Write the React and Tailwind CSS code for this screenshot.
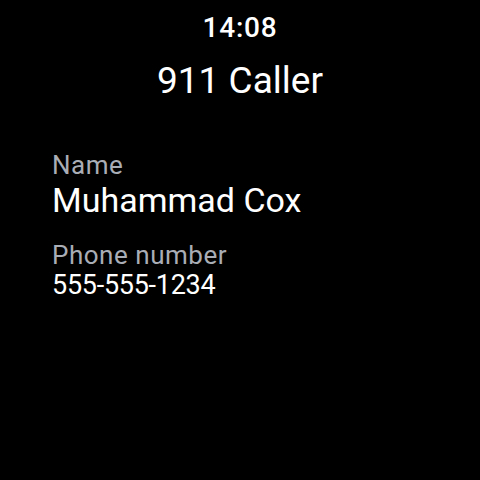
export default function App() {
  return (
    <div className="w-[480px] h-[480px] bg-black text-white flex flex-col" style={{ fontFamily: "Roboto, 'Noto Sans', sans-serif" }}>
      <div className="mt-[14px] text-center text-[28px] leading-none font-medium tracking-[0.03em]">14:08</div>
      <div className="mt-[20px] text-center text-[37px] leading-none">911 Caller</div>
      <div className="mt-[53px] px-[52px] flex flex-col">
        <div className="text-[26px] leading-none tracking-[0.02em] text-[#a9adb5]">Name</div>
        <div className="mt-[5px] text-[34px] leading-none">Muhammad Cox</div>
        <div className="mt-[25px] text-[26px] leading-none tracking-[0.02em] text-[#a9adb5]">Phone number</div>
        <div className="mt-[4px] text-[27px] leading-none tracking-[-0.01em]">555-555-1234</div>
      </div>
    </div>
  );
}
